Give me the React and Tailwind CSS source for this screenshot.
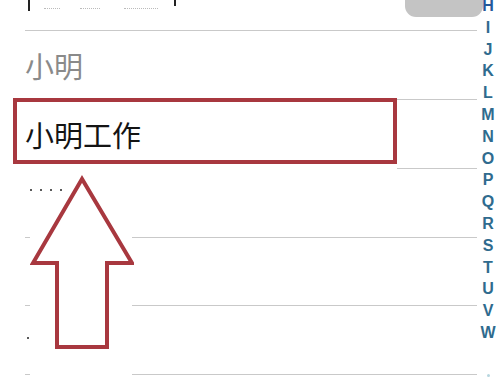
import React from "react";

const letters = ["H","I","J","K","L","M","N","O","P","Q","R","S","T","U","V","W"];

function Sep({ variant }) {
  if (variant === "gap") {
    return (
      <div className="flex h-px">
        <div className="w-[5px] bg-[#c9c9c9]" />
        <div className="ml-[102px] flex-1 bg-[#c9c9c9]" />
      </div>
    );
  }
  if (variant === "right") {
    return (
      <div className="flex h-px">
        <div className="ml-[372px] flex-1 bg-[#c9c9c9]" />
      </div>
    );
  }
  return <div className="h-px bg-[#c9c9c9]" />;
}

export default function App() {
  const cjk = { fontFamily: '"Noto Sans CJK SC", "Noto Sans", sans-serif' };
  return (
    <div className="relative w-[500px] h-[380px] overflow-hidden bg-white flex">
      {/* list */}
      <div className="w-[478px] flex flex-col pl-[25px] pr-[1px]">
        {/* partially visible top row */}
        <div className="h-[30px] relative">
          <div className="flex items-start gap-[14px] pl-[3px]">
            <div className="w-[2px] h-[11px] bg-[#222]" />
            <div className="mt-[8px] w-[16px] h-[3px] border-t border-dotted border-[#bbb]" />
            <div className="mt-[8px] ml-[6px] w-[20px] h-[3px] border-t border-dotted border-[#bbb]" />
            <div className="mt-[8px] ml-[10px] w-[34px] h-[3px] border-t border-dotted border-[#bbb]" />
            <div className="ml-[2px] w-[2px] h-[6px] bg-[#222]" />
          </div>
        </div>
        <Sep />
        <div className="h-[68px] flex items-center">
          <span style={cjk} className="text-[29px] leading-none text-[#8a8a8a]">小明</span>
        </div>
        <Sep variant="right" />
        <div className="h-[68px] flex items-center">
          <span style={cjk} className="text-[29px] leading-none text-[#141414]">小明工作</span>
        </div>
        <Sep variant="right" />
        <div className="h-[68px] relative">
          <div className="flex gap-[8px] pl-[5px] pt-[20px]">
            <div className="w-[2px] h-[2px] rounded-full bg-[#222]" />
            <div className="w-[2px] h-[2px] rounded-full bg-[#222]" />
            <div className="w-[2px] h-[2px] rounded-full bg-[#222]" />
            <div className="w-[2px] h-[2px] rounded-full bg-[#222]" />
          </div>
        </div>
        <Sep variant="gap" />
        <div className="h-[67px]" />
        <Sep variant="gap" />
        <div className="h-[68px] relative">
          <div className="mt-[31px] ml-[2px] w-[2px] h-[2px] rounded-full bg-[#222]" />
        </div>
        <Sep variant="gap" />
        <div className="flex-1" />
      </div>

      {/* index column */}
      <div className="w-[22px] flex flex-col items-center pr-[2px] mt-[-5px]">
        {letters.map((l) => (
          <div
            key={l}
            className={
              "h-[21.8px] leading-[21.8px] text-[16px] font-bold " +
              (l === "H" ? "text-[#24589a]" : "text-[#2f6b8e]")
            }
            style={{ fontFamily: '"Liberation Sans", Arial, sans-serif' }}
          >
            {l}
          </div>
        ))}
        <div className="mt-[30px] w-[3px] h-[3px] rounded-full bg-[#b7d6df]" />
      </div>

      {/* gray bubble top right */}
      <div className="absolute left-[405px] top-0 w-[78px] h-[17px] rounded-b-[11px] bg-[#c4c4c4]" />

      {/* red highlight box */}
      <div className="absolute left-[13px] top-[98px] w-[384px] h-[66px] border-[4px] border-[#a8383f]" />

      {/* red arrow */}
      <svg
        className="absolute left-[30px] top-[170px]"
        width="104"
        height="190"
        viewBox="0 0 104 190"
      >
        <polygon
          points="52,9 3,93 27,93 27,177 77,177 77,93 102,93"
          fill="white"
          stroke="#a8383f"
          strokeWidth="4"
          strokeLinejoin="miter"
        />
      </svg>
    </div>
  );
}
